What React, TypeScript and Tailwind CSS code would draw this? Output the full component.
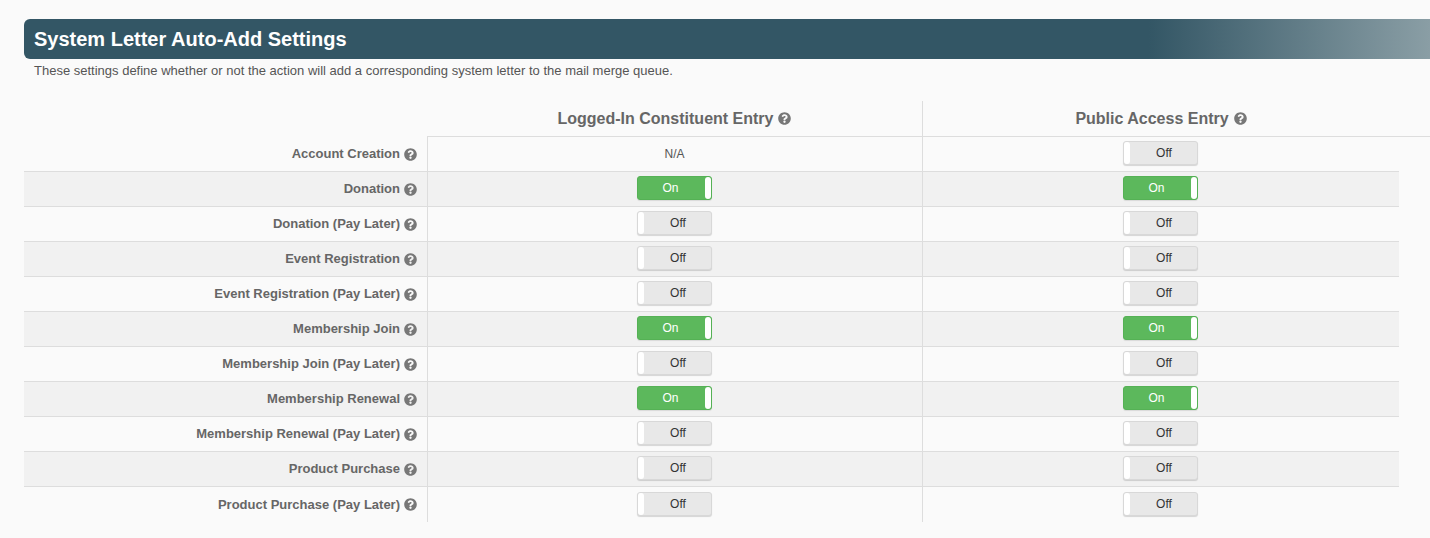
import { FaQuestionCircle } from "react-icons/fa";

const rows: [string, "na" | boolean, boolean][] = [
  ["Account Creation", "na", false],
  ["Donation", true, true],
  ["Donation (Pay Later)", false, false],
  ["Event Registration", false, false],
  ["Event Registration (Pay Later)", false, false],
  ["Membership Join", true, true],
  ["Membership Join (Pay Later)", false, false],
  ["Membership Renewal", true, true],
  ["Membership Renewal (Pay Later)", false, false],
  ["Product Purchase", false, false],
  ["Product Purchase (Pay Later)", false, false],
];

function Toggle({ on }: { on: boolean }) {
  if (on) {
    return (
      <div className="flex h-6 w-[75px] items-center justify-between rounded-[3px] border border-[#55b155] bg-[#5cb85c] pl-[1px] shadow-[0_1px_1px_rgba(0,0,0,0.1)]">
        <span className="w-[66px] pr-[3px] text-center text-xs text-white">On</span>
        <span className="h-full w-[6px] rounded-[3px] bg-white" />
      </div>
    );
  }
  return (
    <div className="flex h-6 w-[75px] items-center rounded-[3px] border border-[#d8d8d8] bg-[#e8e8e8] shadow-[0_1px_1px_rgba(0,0,0,0.15)]">
      <span className="h-full w-[6px] rounded-[3px] bg-white" />
      <span className="flex-1 pl-[1px] text-center text-xs text-[#333]">Off</span>
    </div>
  );
}

export default function App() {
  return (
    <div className="h-[538px] overflow-hidden bg-[#fafafa] pt-[19px] pl-6 font-['Liberation_Sans',Arial,sans-serif] text-[#555]">
      <div className="flex h-10 items-center rounded-l-md bg-[linear-gradient(to_right,#335665_0%,#335665_80%,#8a9ea5_100%)] pl-[10px] text-xl font-bold text-white">
        System Letter Auto-Add Settings
      </div>
      <p className="mt-[4px] ml-[10px] h-[38px] text-[13px] leading-[15px] text-[#555]">
        These settings define whether or not the action will add a corresponding system letter to the mail merge queue.
      </p>

      <div className="flex h-[36px] text-[#666]">
        <div className="w-[403px]" />
        <div className="flex w-[495px] items-center justify-center gap-[5px] border-b border-[#ddd] text-base font-bold">
          Logged-In Constituent Entry
          <FaQuestionCircle className="text-[13px] text-[#777]" />
        </div>
        <div className="flex w-[508px] items-center border-b border-l border-[#ddd] text-base font-bold">
          <div className="flex w-[476px] items-center justify-center gap-[5px]">
            Public Access Entry
            <FaQuestionCircle className="text-[13px] text-[#777]" />
          </div>
        </div>
      </div>

      <div className="w-[1375px]">
        {rows.map(([label, a, b], i) => {
          const last = i === rows.length - 1;
          return (
            <div
              key={label}
              className={`flex h-[35px] ${last ? "" : "border-b border-[#ddd]"} ${i % 2 === 1 ? "bg-[#f1f1f1]" : ""}`}
            >
              <div className="flex w-[403px] items-center justify-end gap-[4px] pr-[10px] text-[13px] font-bold text-[#666]">
                {label}
                <FaQuestionCircle className="text-[13px] text-[#777]" />
              </div>
              <div className={`flex w-[495px] items-center justify-center border-l border-[#ddd] pr-[1px] text-xs ${a === "na" ? "" : last ? "pb-[1px]" : "pb-[2px]"}`}>
                {a === "na" ? <span className="text-[#555]">N/A</span> : <Toggle on={a} />}
              </div>
              <div className={`flex flex-1 items-center justify-center border-l border-[#ddd] pr-[1px] ${last ? "pb-[1px]" : "pb-[2px]"}`}>
                <Toggle on={b} />
              </div>
            </div>
          );
        })}
      </div>
    </div>
  );
}
